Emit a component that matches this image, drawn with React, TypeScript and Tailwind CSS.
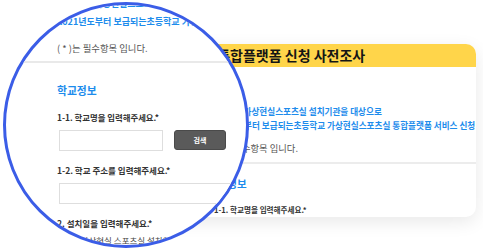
export default function App() {
  return (
    <div className="relative w-[483px] h-[251px] overflow-hidden bg-white font-['Noto_Sans_CJK_KR','Noto_Sans',sans-serif]">
      {/* background card */}
      <div className="pt-[44px] pl-[100px]">
        <div className="flex h-[173px] w-[376px] flex-col overflow-hidden rounded-[10px] bg-white shadow-[0_5px_18px_rgba(0,0,0,0.09)]">
          <div className="flex h-[23px] shrink-0 items-center bg-[#FFD54A] pl-[11px]">
            <span className="whitespace-nowrap text-[14px] font-bold leading-[23px] text-[#151515]">
              가상현실스포츠실 통합플랫폼 신청 사전조사
            </span>
          </div>
          <div className="pt-[37px]">
            <div className="pl-[108px]">
              <p className="whitespace-nowrap text-[8.6px] font-bold leading-[14px] text-[#1d8cec]">
                전국 초등 가상현실스포츠실 설치기관을 대상으로
              </p>
              <p className="whitespace-nowrap text-[8.6px] font-bold leading-[14px] text-[#1d8cec]">
                2021년도부터 보급되는초등학교 가상현실스포츠실 통합플랫폼 서비스 신청
              </p>
              <p className="mt-[9px] whitespace-nowrap text-[9.3px] leading-[14px] text-[#555]">
                ( * )는 필수항목 입니다.
              </p>
            </div>
            <div className="mt-[7px] h-[2px] bg-[#ececec]" />
            <div className="pl-[108px]">
              <p className="mt-[12px] whitespace-nowrap text-[10.5px] font-bold leading-[16px] text-[#1d8cec]">
                학교정보
              </p>
              <p className="mt-[11px] whitespace-nowrap pl-[6px] text-[7.6px] font-bold leading-[14px] text-[#333]">
                1-1. 학교명을 입력해주세요.*
              </p>
            </div>
          </div>
        </div>
      </div>

      {/* magnifier lens */}
      <div className="absolute left-[3px] top-[2px] h-[246px] w-[246px] overflow-hidden rounded-full border-[3px] border-[#3b5de7] bg-white">
        <div className="-mt-[10px] flex flex-col">
          <p className="whitespace-nowrap pl-[51px] text-[9px] font-bold leading-[18px] text-[#1d8cec]">
            전국 초등 가상현실스포츠실 설치기관을 대상으로
          </p>
          <p className="whitespace-nowrap pl-[51px] text-[9px] font-bold leading-[18px] text-[#1d8cec]">
            2021년도부터 보급되는초등학교 가상현실스포츠실 통합플랫폼 서비스 신청
          </p>
          <p className="mt-[8px] whitespace-nowrap pl-[51px] text-[9.4px] leading-[18px] text-[#555]">
            ( * )는 필수항목 입니다.
          </p>
          <div className="mt-[4px] h-[2px] w-full bg-[#e9e9e9]" />
          <p className="mt-[18px] whitespace-nowrap pl-[51px] text-[10.8px] font-bold leading-[18px] text-[#1d8cec]">
            학교정보
          </p>
          <p className="mt-[10px] whitespace-nowrap pl-[51px] text-[8.4px] font-bold leading-[16px] text-[#333]">
            1-1. 학교명을 입력해주세요.*
          </p>
          <div className="mt-[5px] flex items-start pl-[53px]">
            <div className="h-[21px] w-[104px] border border-[#dedede] bg-white" />
            <div className="ml-[11px] flex h-[20px] w-[52px] items-center justify-center rounded-[3px] border border-[#4a4a4a] bg-[#5a5a5a] text-[7px] font-bold text-white">
              검색
            </div>
          </div>
          <p className="mt-[11px] whitespace-nowrap pl-[51px] text-[8.5px] font-bold leading-[16px] text-[#333]">
            1-2. 학교 주소를 입력해주세요.*
          </p>
          <div className="ml-[53px] mt-[5px] h-[21px] w-[300px] shrink-0 border border-[#dedede] bg-white" />
          <p className="mt-[11px] whitespace-nowrap pl-[51px] text-[8.5px] font-bold leading-[16px] text-[#333]">
            2. 설치일을 입력해주세요.*
          </p>
          <p className="mt-[1px] whitespace-nowrap pl-[58px] text-[8.5px] leading-[16px] text-[#444]">
            2-1. 가상현실 스포츠실 설치일을 입력해주세요.
          </p>
        </div>
      </div>
    </div>
  );
}
